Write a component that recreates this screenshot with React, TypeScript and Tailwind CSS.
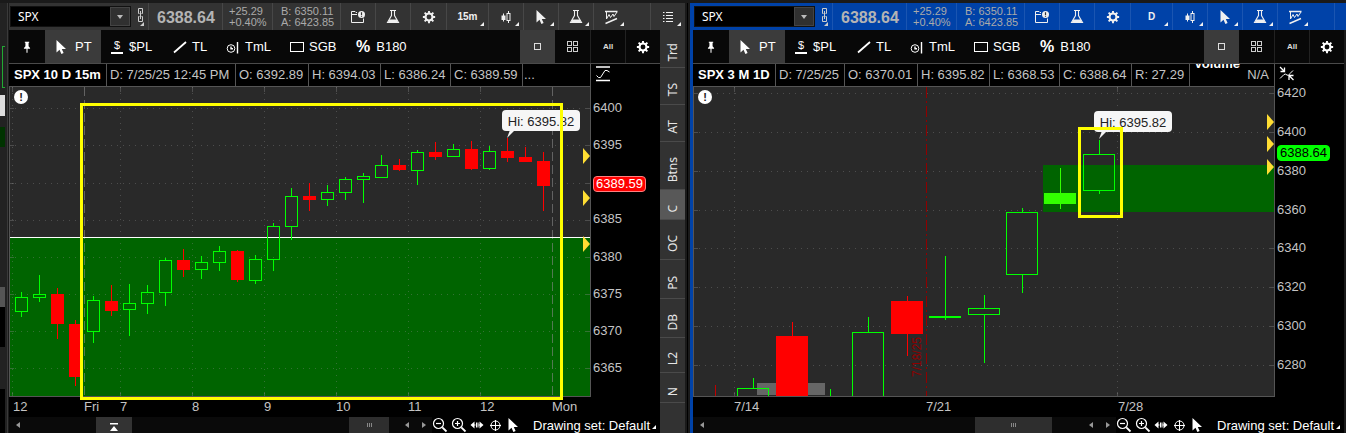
import { ReactNode } from "react";
import clsx from "clsx";

type Candle = {
  x: number;
  high: number;
  top: number;
  bottom: number;
  low: number;
  kind: "up" | "down" | "solid";
};

type Cell = { text: string; width: string };

interface IconProps {
  children: ReactNode;
  className?: string;
}

const Icon = ({ children, className = "size-4" }: IconProps) => (
  <svg
    viewBox="0 0 16 16"
    className={clsx("shrink-0", className)}
    fill="none"
    stroke="currentColor"
    aria-hidden="true"
  >
    {children}
  </svg>
);

const LinkIcon = () => (
  <svg viewBox="0 0 8 16" className="h-4 w-2" fill="none" stroke="currentColor" aria-hidden="true">
    <path d="M1.5 6.5V1.5H5.5V6.5M1.5 9.5V14.5H5.5V9.5M3.5 4V12M1.5 6.5H2.5M4.5 6.5H5.5M1.5 9.5H2.5M4.5 9.5H5.5" />
  </svg>
);

const NewsIcon = () => (
  <Icon>
    <path d="M7 3.5H6L5 2.5H1.5V13.5H13.5V9.5M1.5 5.5H7" />
    <circle cx="11.5" cy="5.5" r="3.5" fill="currentColor" stroke="none" />
    <path d="M11.5 3.3V5.9M11.5 6.7V7.8" stroke="#333" strokeWidth="1.2" />
  </Icon>
);

const FlaskIcon = () => (
  <Icon>
    <path d="M5 1.5H11M6.5 2V6.5L2.5 13.5H13.5L9.5 6.5V2" strokeWidth="1.1" />
    <path d="M4.5 10.5H11.5L13.5 14H2.5Z" fill="currentColor" stroke="none" />
  </Icon>
);

const GearIcon = () => (
  <Icon className="size-3.5">
    <circle cx="8" cy="8" r="4" strokeWidth="2.4" />
    <path
      d="M8 1V4M8 12V15M1 8H4M12 8H15M3 3L5.2 5.2M10.8 10.8L13 13M13 3L10.8 5.2M5.2 10.8L3 13"
      strokeWidth="2.2"
    />
  </Icon>
);

const CandlesIcon = () => (
  <Icon>
    <path d="M5.5 4.5V12.5M10.5 2V4M10.5 11.5V14" />
    <rect x="3.5" y="6.5" width="4" height="4.5" fill="currentColor" stroke="none" />
    <rect x="9" y="4.5" width="3" height="7" />
  </Icon>
);

const PointerIcon = () => (
  <Icon>
    <path
      d="M3.5 1V13.5L6.5 10.8L8.4 15L10.6 14L8.8 9.9H13Z"
      fill="currentColor"
      stroke="none"
    />
  </Icon>
);

const PatternIcon = () => (
  <Icon>
    <path d="M2 2.5H14.5M2.5 14.5L14 9.5" strokeWidth="1.4" />
    <path d="M3.5 3V10L6 5.5L7.5 8.5L10 5L11 7.5L14 3" />
  </Icon>
);

const ListIcon = () => (
  <Icon>
    <path d="M3 3.5H4.5M3 6.5H4.5M3 9.5H4.5M3 12.5H4.5M6 3.5H13M6 6.5H13M6 9.5H13M6 12.5H13" />
  </Icon>
);

const PinIcon = () => (
  <Icon className="size-3.5">
    <path d="M5.5 2H10.5V3H9.8V7L11.5 9V10H4.5V9L6.2 7V3H5.5Z" fill="currentColor" stroke="none" />
    <path d="M8 9V14.5" strokeWidth="1.2" />
  </Icon>
);

const PriceLevelIcon = () => (
  <span className="mr-0.5 flex w-3 flex-col items-center border-b-2 border-current pb-px text-[11px] leading-[11px]">
    $
  </span>
);

const TrendIcon = () => (
  <Icon>
    <path d="M2 13.5L14 3" strokeWidth="1.8" />
  </Icon>
);

const TimeLineIcon = () => (
  <Icon>
    <circle cx="6" cy="9.5" r="3.8" />
    <path d="M6 7.5V9.8H8M12.5 3V14.5" strokeWidth="1.4" />
  </Icon>
);

const BoxIcon = () => (
  <Icon>
    <rect x="1.5" y="3.5" width="13" height="9" />
  </Icon>
);

const PercentIcon = () => <span className="mr-0.5 text-base leading-4 font-bold">%</span>;

const ZoomIcon = ({ plus }: { plus?: boolean }) => (
  <Icon>
    <circle cx="6.5" cy="6.5" r="5" strokeWidth="1.2" />
    <path d="M10.3 10.3L14.5 14.5" strokeWidth="1.8" />
    <path d={plus ? "M4 6.5H9M6.5 4V9" : "M4 6.5H9"} strokeWidth="1.2" />
  </Icon>
);

const SpreadIcon = () => (
  <Icon>
    <path d="M1.5 8L5.5 4.5V11.5ZM14.5 8L10.5 4.5V11.5Z" fill="currentColor" stroke="none" />
    <path d="M4 8H6.5M9.5 8H12M7.5 5.5V10.5M9 5.5V10.5" />
  </Icon>
);

const CrosshairIcon = () => (
  <Icon>
    <circle cx="8.5" cy="8.5" r="4.5" />
    <path d="M8.5 3V14M3 8.5H14" />
  </Icon>
);

const CornerMark = () => (
  <svg
    viewBox="0 0 4 4"
    className="absolute right-1 bottom-1 size-1"
    fill="currentColor"
    aria-hidden="true"
  >
    <path d="M4 0V4H0Z" />
  </svg>
);

interface ToolButtonProps {
  label: string;
  width?: string;
  menu?: boolean;
  children: ReactNode;
}

const ToolButton = ({ label, width = "w-[35px]", menu, children }: ToolButtonProps) => (
  <button
    type="button"
    aria-label={label}
    className={clsx(
      "relative flex shrink-0 items-center justify-center border-l border-white/10 text-[#f0f0f0]",
      width,
    )}
  >
    {children}
    {menu && <CornerMark />}
  </button>
);

interface SymbolBarProps {
  active?: boolean;
  timeframe: string;
}

const SymbolBar = ({ active, timeframe }: SymbolBarProps) => (
  <header
    className={clsx(
      "flex h-[27px] shrink-0 items-stretch overflow-hidden",
      active ? "bg-[#0042a8]" : "bg-[#333]",
    )}
  >
    <div className="my-[3px] ml-px flex w-[121px] shrink-0 items-stretch border border-[#111] bg-black">
      <input
        aria-label="Symbol"
        defaultValue="SPX"
        className="w-full min-w-0 bg-transparent pl-[7px] font-['Noto_Sans',sans-serif] text-[12px] leading-[19px] text-white outline-none"
      />
      <button
        type="button"
        aria-label="Symbol list"
        className="flex w-5 shrink-0 items-center justify-center border border-[#444] bg-[#303030] text-[#bbb]"
      >
        <svg viewBox="0 0 6 4" className="h-1 w-1.5" fill="currentColor">
          <path d="M0 0H6L3 4Z" />
        </svg>
      </button>
    </div>
    <button
      type="button"
      aria-label="Link symbol"
      className="relative flex w-[17px] shrink-0 items-center pb-1 pl-1.5 text-[#ccc]"
    >
      <LinkIcon />
      <CornerMark />
    </button>
    <strong className="flex w-[74px] shrink-0 items-center border-l border-white/10 pt-0.5 pl-2 text-base text-[#b4b4b4]">
      6388.64
    </strong>
    <div className="flex w-[50px] shrink-0 flex-col justify-center border-l border-white/10 pl-1.5 text-[11px] leading-[11px] text-[#aaa]">
      <span>+25.29</span>
      <span>+0.40%</span>
    </div>
    <div className="flex w-[68px] shrink-0 flex-col justify-center border-l border-white/10 pl-2 text-[11px] leading-[11px] whitespace-nowrap text-[#aaa]">
      <span>B: 6350.11</span>
      <span>A: 6423.85</span>
    </div>
    <ToolButton label="News">
      <NewsIcon />
    </ToolButton>
    <ToolButton label="Studies">
      <FlaskIcon />
    </ToolButton>
    <ToolButton label="Settings" width="w-9">
      <GearIcon />
    </ToolButton>
    <ToolButton label="Timeframe" width="w-[42px]" menu>
      <span className="text-[10px] font-bold">{timeframe}</span>
    </ToolButton>
    <ToolButton label="Chart type" menu>
      <CandlesIcon />
    </ToolButton>
    <ToolButton label="Cursor" menu>
      <PointerIcon />
    </ToolButton>
    <ToolButton label="Quick studies" menu>
      <FlaskIcon />
    </ToolButton>
    <ToolButton label="Patterns" menu>
      <PatternIcon />
    </ToolButton>
    <span className="flex-1" />
    {active ? (
      <span className="w-3 shrink-0 border-l border-white/10" />
    ) : (
      <ToolButton label="Menu" menu>
        <ListIcon />
      </ToolButton>
    )}
  </header>
);

const drawTools = [
  { label: "$PL", icon: <PriceLevelIcon />, width: "w-[61px]" },
  { label: "TL", icon: <TrendIcon />, width: "w-[53px]" },
  { label: "TmL", icon: <TimeLineIcon />, width: "w-[64px]" },
  { label: "SGB", icon: <BoxIcon />, width: "w-[67px]" },
  { label: "B180", icon: <PercentIcon />, width: "w-[64px]" },
];

const DrawBar = () => (
  <nav className="flex h-[34px] shrink-0 items-stretch border-b border-[#4a4a4a] bg-[#080808] text-[13px] text-white">
    <button type="button" aria-label="Pin" className="flex w-9 shrink-0 items-center justify-center">
      <PinIcon />
    </button>
    <button
      type="button"
      className="mr-2.5 flex w-14 shrink-0 items-center gap-1.5 bg-[#3b3b3b] pl-2"
    >
      <PointerIcon />
      PT
    </button>
    {drawTools.map((tool) => (
      <button
        key={tool.label}
        type="button"
        className={clsx("flex shrink-0 items-center gap-1", tool.width)}
      >
        {tool.icon}
        {tool.label}
      </button>
    ))}
    <span className="flex-1" />
    <button
      type="button"
      aria-label="Single chart"
      className="flex w-[35px] shrink-0 items-center justify-center bg-[#3b3b3b]"
    >
      <span className="size-[7px] border border-[#ddd]" />
    </button>
    <button
      type="button"
      aria-label="Chart grid"
      className="flex w-[35px] shrink-0 items-center justify-center"
    >
      <span className="grid grid-cols-2 gap-px">
        {[0, 1, 2, 3].map((n) => (
          <span key={n} className="size-[5px] border border-[#ccc]" />
        ))}
      </span>
    </button>
    <button
      type="button"
      className="flex w-[35px] shrink-0 items-center justify-center border-l border-[#222] text-[8px] font-bold text-[#ddd]"
    >
      All
    </button>
    <button
      type="button"
      aria-label="Drawing settings"
      className="flex w-[35px] shrink-0 items-center justify-center border-l border-[#222]"
    >
      <GearIcon />
    </button>
  </nav>
);

const SIDES = {
  up: { stroke: "#00ff00", fill: "none" },
  down: { stroke: "#ff0000", fill: "#ff0000" },
  solid: { stroke: "#33ff00", fill: "#33ff00" },
};

interface CandlesProps {
  candles: Candle[];
  width: number;
}

const Candles = ({ candles, width }: CandlesProps) => (
  <g>
    {candles.map((c) => (
      <g key={c.x} {...SIDES[c.kind]}>
        <path d={`M${c.x + 0.5} ${c.high}V${c.top}M${c.x + 0.5} ${c.bottom}V${c.low}`} />
        <rect
          x={c.x + 0.5 - Math.floor(width / 2)}
          y={c.top + 0.5}
          width={width - 1}
          height={Math.max(c.bottom - c.top - 1, 1)}
        />
      </g>
    ))}
  </g>
);

interface GridProps {
  rows: number[];
  columns: number[];
  dashed?: number[];
}

const Grid = ({ rows, columns, dashed = [] }: GridProps) => (
  <g stroke="#888" strokeOpacity="0.38">
    {rows.map((y) => (
      <path key={y} d={`M0 ${y}.5H582`} strokeDasharray="1 5" />
    ))}
    {rows.map((y) => (
      <path key={`t${y}`} d={`M0 ${y}.5H5M577 ${y}.5H582`} />
    ))}
    {columns.map((x) => (
      <path key={x} d={`M${x}.5 0V310`} strokeDasharray="1 5" />
    ))}
    {columns.map((x) => (
      <path key={`t${x}`} d={`M${x}.5 0V5M${x}.5 305V310`} />
    ))}
    {dashed.map((x) => (
      <path key={x} d={`M${x}.5 0V310`} strokeDasharray="9 4" strokeOpacity="0.6" />
    ))}
  </g>
);

const Markers = ({ at }: { at: number[] }) => (
  <g fill="#ffdd33">
    {at.map((y) => (
      <path key={y} d={`M574 ${y - 8}L581 ${y}L574 ${y + 8}Z`} />
    ))}
  </g>
);

const HighCallout = ({ className }: { className: string }) => (
  <div
    className={clsx(
      "absolute flex h-[21px] w-[78px] items-center justify-center rounded bg-[#f6f6f6] pt-0.5 text-[13px] whitespace-nowrap text-[#222]",
      className,
    )}
  >
    Hi: 6395.82
    <svg viewBox="0 0 10 8" className="absolute top-5 left-1 h-2 w-2.5" fill="#f6f6f6">
      <path d="M4 0H9L1 8Z" />
    </svg>
  </div>
);

// [high, top, bottom, low, kind], one bar every 18px
const intraday: [number, number, number, number, Candle["kind"]][] = [
  [205, 210, 225, 230, "up"],
  [188, 207, 211, 215, "up"],
  [201, 207, 237, 252, "down"],
  [233, 237, 290, 299, "down"],
  [209, 213, 245, 256, "up"],
  [198, 214, 224, 229, "down"],
  [197, 216, 223, 249, "up"],
  [198, 205, 217, 227, "up"],
  [171, 173, 206, 219, "up"],
  [162, 173, 183, 190, "down"],
  [169, 175, 183, 192, "up"],
  [159, 164, 176, 184, "up"],
  [163, 164, 193, 195, "down"],
  [168, 172, 194, 197, "up"],
  [136, 139, 173, 184, "up"],
  [101, 109, 140, 153, "up"],
  [96, 109, 113, 124, "down"],
  [98, 105, 113, 119, "up"],
  [90, 92, 106, 113, "up"],
  [86, 89, 93, 116, "up"],
  [68, 78, 91, 91, "up"],
  [72, 78, 83, 84, "down"],
  [63, 65, 84, 98, "up"],
  [55, 65, 70, 73, "down"],
  [57, 62, 70, 70, "up"],
  [54, 62, 82, 83, "down"],
  [59, 64, 82, 83, "up"],
  [51, 64, 71, 75, "down"],
  [60, 70, 75, 75, "down"],
  [65, 74, 99, 124, "down"],
];

const intradayCandles: Candle[] = intraday.map(([high, top, bottom, low, kind], i) => ({
  x: 12 + i * 18,
  high,
  top,
  bottom,
  low,
  kind,
}));

const dailyCandles: Candle[] = [
  { x: 60, high: 291, top: 301, bottom: 340, low: 340, kind: "up" },
  { x: 99, high: 235, top: 249, bottom: 340, low: 340, kind: "down" },
  { x: 175, high: 230, top: 245, bottom: 340, low: 340, kind: "up" },
  { x: 214, high: 209, top: 214, bottom: 247, low: 269, kind: "down" },
  { x: 252, high: 169, top: 229, bottom: 231, low: 233, kind: "up" },
  { x: 291, high: 208, top: 221, bottom: 228, low: 276, kind: "up" },
  { x: 329, high: 121, top: 125, bottom: 188, low: 206, kind: "up" },
  { x: 367, high: 81, top: 106, bottom: 117, low: 122, kind: "solid" },
  { x: 406, high: 53, top: 67, bottom: 104, low: 107, kind: "up" },
];

const IntradayPlot = () => (
  <>
    <svg
      viewBox="1 0 580 309"
      preserveAspectRatio="none"
      className="block size-full"
      fill="none"
      role="img"
      aria-label="SPX 15 minute candles"
    >
      <rect y="151" width="582" height="159" fill="#006400" />
      <Grid
        rows={[21, 58, 96, 133, 170, 207, 244, 281]}
        columns={[3, 111, 183, 255, 327, 399, 471]}
        dashed={[75, 543]}
      />
      <path d="M0 150.5H582" stroke="#fff" />
      <Candles candles={intradayCandles} width={13} />
      <Markers at={[69, 111, 157]} />
    </svg>
    <HighCallout className="top-[23px] left-[492px]" />
    <div className="absolute top-4 left-[70px] h-[297px] w-[483px] border-3 border-[#ffff00]" />
  </>
);

const DailyPlot = () => (
  <>
    <svg
      viewBox="1 0 580 309"
      preserveAspectRatio="none"
      className="block size-full"
      fill="none"
      role="img"
      aria-label="SPX daily candles"
    >
      <Grid rows={[6, 45, 84, 123, 161, 200, 239, 278]} columns={[41, 424]} />
      <rect x="350" y="78" width="232" height="47" fill="#006400" />
      <rect x="64" y="296" width="68" height="12" fill="#666" />
      <path d="M233.5 0V310" stroke="#900000" strokeDasharray="11 3 2 3" />
      <text
        transform="translate(228 290) rotate(-90)"
        className="text-[12px]"
        fill="#900000"
      >
        7/18/25
      </text>
      <path d="M22.5 298V310" stroke="#c00000" />
      <path d="M137.5 302V310" stroke="#00ff00" />
      <Candles candles={dailyCandles} width={32} />
      <Markers at={[35, 57, 80]} />
    </svg>
    <HighCallout className="top-6 left-[400px]" />
    <div className="absolute top-10 left-[384px] h-[91px] w-[45px] border-3 border-[#ffff00]" />
  </>
);

interface TimeAxisProps {
  offset: string;
  ticks: { label: string; span: number }[];
}

const TimeAxis = ({ offset, ticks }: TimeAxisProps) => (
  <div className={clsx("flex h-5 shrink-0 items-center text-[13px] text-[#c4c4c4]", offset)}>
    {ticks.map((tick, i) => (
      <span key={i} className="min-w-0 basis-0 whitespace-nowrap" style={{ flexGrow: tick.span }}>
        {tick.label}
      </span>
    ))}
  </div>
);

const ScrollArrow = ({ right }: { right?: boolean }) => (
  <button
    type="button"
    aria-label={right ? "Scroll right" : "Scroll left"}
    className="flex w-[17px] shrink-0 items-center justify-center text-[#999]"
  >
    <svg viewBox="0 0 4 6" className="h-1.5 w-1" fill="currentColor">
      <path d={right ? "M0 0L4 3L0 6Z" : "M4 0L0 3L4 6Z"} />
    </svg>
  </button>
);

interface BottomBarProps {
  thumb: string;
  expander?: boolean;
}

const BottomBar = ({ thumb, expander }: BottomBarProps) => (
  <footer className="flex h-4 shrink-0 items-stretch text-white">
    <div className="flex min-w-0 flex-1 items-stretch bg-[#0a0a0a]">
      <ScrollArrow />
      {expander && (
        <button
          type="button"
          aria-label="Expand panel"
          className="ml-[70px] flex w-9 items-center justify-center bg-[#333] pt-1"
        >
          <svg viewBox="0 0 8 8" className="size-2" fill="currentColor">
            <path d="M0 0H8V1.5H0ZM4 3L8 8H0Z" />
          </svg>
        </button>
      )}
      <span className="flex-1" />
      <div className={clsx("flex items-center justify-center gap-px bg-[#2e2e2e]", thumb)}>
        {[0, 1, 2].map((n) => (
          <span key={n} className="h-1 w-px bg-[#888]" />
        ))}
      </div>
      <ScrollArrow />
      <ScrollArrow right />
    </div>
    <div className="flex shrink-0 items-start gap-0.5 pr-3">
      <button type="button" aria-label="Zoom out">
        <ZoomIcon />
      </button>
      <button type="button" aria-label="Zoom in" className="ml-px">
        <ZoomIcon plus />
      </button>
      <button type="button" aria-label="Fit width">
        <SpreadIcon />
      </button>
      <button type="button" aria-label="Crosshair">
        <CrosshairIcon />
      </button>
      <button type="button" aria-label="Pointer">
        <PointerIcon />
      </button>
    </div>
    <button
      type="button"
      className="relative w-[127px] shrink-0 pt-0.5 text-left text-[13px] leading-[14px] whitespace-nowrap"
    >
      Drawing set: Default
      <CornerMark />
    </button>
  </footer>
);

interface ChartProps {
  title: Cell;
  cells: Cell[];
  tail: ReactNode;
  scaleIcon: ReactNode;
  prices: string[];
  priceOffset: string;
  badge: ReactNode;
  plot: ReactNode;
  axis: ReactNode;
  bottom: ReactNode;
}

const Chart = ({
  title,
  cells,
  tail,
  scaleIcon,
  prices,
  priceOffset,
  badge,
  plot,
  axis,
  bottom,
}: ChartProps) => (
  <section className="flex min-w-0 flex-1 flex-col bg-black">
    <DrawBar />
    <div className="flex min-h-0 flex-1">
      <div className="flex min-w-0 flex-1 flex-col">
        <div className="flex h-[23px] shrink-0 items-stretch border-b border-[#555] text-[13px] whitespace-nowrap text-[#c4c4c4]">
          <h2 className={clsx("flex shrink-0 items-center pl-[5px] font-bold text-white", title.width)}>
            {title.text}
          </h2>
          {cells.map((cell) => (
            <span
              key={cell.text}
              className={clsx("flex shrink-0 items-center border-l border-[#555] pl-[3px]", cell.width)}
            >
              {cell.text}
            </span>
          ))}
          {tail}
        </div>
        <div className="relative min-h-0 flex-1 border-x border-b border-[#555] bg-[#292929]">
          {plot}
          <span className="absolute top-[3px] left-1 flex size-3.5 items-center justify-center rounded-full bg-white text-[11px] font-bold text-[#222]">
            !
          </span>
        </div>
        {axis}
      </div>
      <div className="relative flex w-[69px] shrink-0 flex-col">
        <div className="h-5 shrink-0 pt-0.5 pl-1 text-white">{scaleIcon}</div>
        <div
          className={clsx(
            "flex flex-1 flex-col justify-between pl-0.5 text-[13px] leading-[18px] text-[#c4c4c4]",
            priceOffset,
          )}
        >
          {prices.map((price, i) => (
            <span key={i} className="h-[18px]">
              {price}
            </span>
          ))}
        </div>
        {badge}
      </div>
    </div>
    {bottom}
  </section>
);

const tabs = [
  { label: "Trd", height: "h-[38px]" },
  { label: "TS", height: "h-[37px]" },
  { label: "AT", height: "h-[37px]" },
  { label: "Btns", height: "h-12" },
  { label: "C", height: "h-[30px]" },
  { label: "OC", height: "h-10" },
  { label: "PS", height: "h-[39px]" },
  { label: "DB", height: "h-[39px]" },
  { label: "L2", height: "h-[35px]" },
  { label: "N", height: "h-[30px]" },
];

const SideTabs = () => (
  <aside className="flex w-[25px] shrink-0 flex-col bg-[#323232]">
    {tabs.map((tab) => (
      <button
        key={tab.label}
        type="button"
        className={clsx(
          "flex shrink-0 items-center justify-center border-b border-[#4a4a4a] pt-2 font-['Noto_Sans',sans-serif] text-[12px] text-[#e6e6e6]",
          tab.height,
          tab.label === "C" && "bg-[#585858]",
        )}
      >
        <span className="rotate-180 [writing-mode:vertical-rl]">{tab.label}</span>
      </button>
    ))}
  </aside>
);

// sliver of the neighbouring panel
const EdgeStrip = () => (
  <div className="flex w-2 shrink-0 flex-col border-r border-[#3a3a3a] bg-[#222]">
    <div className="mt-[43px] ml-0.5 h-[42px] w-[3px] border-y border-l border-[#22aa33]" />
    <div className="mt-[7px] h-[21px] w-[5px] bg-[#ddd]" />
    <div className="mt-[11px] h-5 w-[5px] bg-[#003300]" />
    <div className="mt-[140px] h-5 w-[5px] bg-[#555]" />
    <div className="h-10 w-[5px] bg-black" />
    <div className="mt-[42px] w-[5px] flex-1 bg-black" />
  </div>
);

export default function App() {
  return (
    <div className="h-screen overflow-hidden bg-[#1a1a1a] pt-[3px] font-['Liberation_Sans',Arial,sans-serif]">
      <main className="flex h-full">
        <EdgeStrip />
        <div className="ml-px flex min-w-0 flex-[676] flex-col">
          <SymbolBar timeframe="15m" />
          <div className="flex min-h-0 flex-1">
            <Chart
              title={{ text: "SPX 10 D 15m", width: "w-[97px]" }}
              cells={[
                { text: "D: 7/25/25 12:45 PM", width: "w-[129px]" },
                { text: "O: 6392.89", width: "w-[73px]" },
                { text: "H: 6394.03", width: "w-[72px]" },
                { text: "L: 6386.24", width: "w-[70px]" },
                { text: "C: 6389.59", width: "w-[72px]" },
              ]}
              tail={
                <span className="flex flex-1 items-center border-x border-[#555] pl-px">...</span>
              }
              scaleIcon={
                <Icon>
                  <path d="M1 1H15M1 14.5H15" strokeWidth="1.4" />
                  <path d="M1.5 9.5L3.5 11.5H5.5L10 4.5H12L14.5 6" />
                </Icon>
              }
              prices={["6400", "6395", "", "6385", "6380", "6375", "6370", "6365"]}
              priceOffset="pt-[15px] pb-10"
              badge={
                <span className="absolute top-28 left-0.5 rounded border border-[#ff8080] bg-[#ff0000] px-0.5 text-[13px] leading-[14px] text-white">
                  6389.59
                </span>
              }
              plot={<IntradayPlot />}
              axis={
                <TimeAxis
                  offset="pl-1"
                  ticks={[
                    { label: "12", span: 71 },
                    { label: "Fri", span: 36 },
                    { label: "7", span: 72 },
                    { label: "8", span: 72 },
                    { label: "9", span: 72 },
                    { label: "10", span: 72 },
                    { label: "11", span: 72 },
                    { label: "12", span: 72 },
                    { label: "Mon", span: 39 },
                  ]}
                />
              }
              bottom={<BottomBar thumb="mr-[9px] w-10" expander />}
            />
            <SideTabs />
          </div>
        </div>
        <div className="mx-0.5 w-px shrink-0 bg-black" />
        <div className="flex min-w-0 flex-[653] flex-col border-l-3 border-[#0042a8]">
          <SymbolBar timeframe="D" active />
          <div className="flex min-h-0 flex-1 pr-0.5">
            <Chart
              title={{ text: "SPX 3 M 1D", width: "w-[82px]" }}
              cells={[
                { text: "D: 7/25/25", width: "w-[69px]" },
                { text: "O: 6370.01", width: "w-[73px]" },
                { text: "H: 6395.82", width: "w-[72px]" },
                { text: "L: 6368.53", width: "w-[70px]" },
                { text: "C: 6388.64", width: "w-[72px]" },
                { text: "R: 27.29", width: "w-[58px]" },
              ]}
              tail={
                <span className="relative flex flex-1 items-center justify-end overflow-hidden border-x border-[#555] pr-[5px]">
                  <strong className="absolute -top-2 left-1 leading-4 text-white">Volume</strong>
                  N/A
                </span>
              }
              scaleIcon={
                <Icon>
                  <path d="M1 1L5 5M5.5 1.5V5.5H1.5M14.5 14L10.5 10M10 14V9.5H14.5" strokeWidth="1.3" />
                  <path d="M1 12.5L5 8.5Q6.5 7.5 8 9T11 7.5L14 4.5" />
                </Icon>
              }
              prices={["6420", "6400", "6380", "6360", "6340", "6320", "6300", "6280"]}
              priceOffset="pb-[43px]"
              badge={
                <span className="absolute top-[81px] left-0.5 rounded border border-[#00ff00] bg-[#00ff00] px-0.5 text-[13px] leading-[14px] text-black">
                  6388.64
                </span>
              }
              plot={<DailyPlot />}
              axis={
                <TimeAxis
                  offset="pl-[41px]"
                  ticks={[
                    { label: "7/14", span: 192 },
                    { label: "7/21", span: 192 },
                    { label: "7/28", span: 157 },
                  ]}
                />
              }
              bottom={<BottomBar thumb="mr-[30px] w-[77px]" />}
            />
          </div>
        </div>
      </main>
    </div>
  );
}
